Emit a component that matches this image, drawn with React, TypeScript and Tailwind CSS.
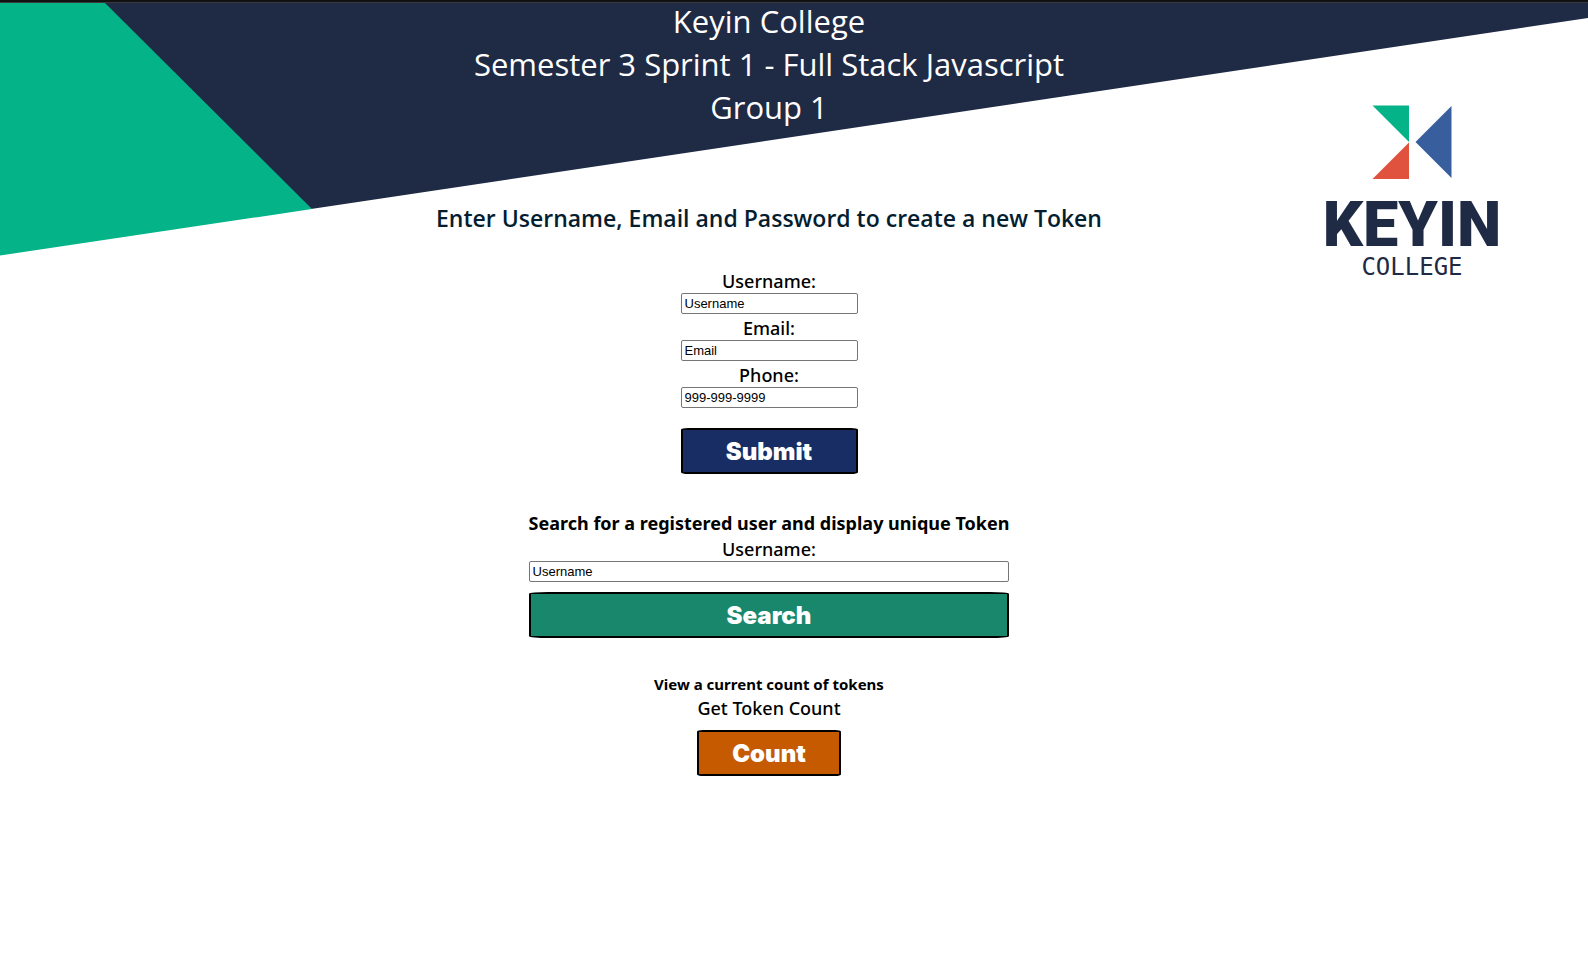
import type { ComponentProps, ReactNode } from "react";

function Backdrop() {
  return (
    <svg
      className="absolute inset-x-0 top-0 -z-10 h-[253px] w-full"
      viewBox="0 0 1588 253"
      preserveAspectRatio="none"
      aria-hidden="true"
    >
      <polygon points="100,0 1588,0 1588,15 311,206" fill="#1f2a44" />
      <polygon points="0,0 105,0 312,206 0,252.5" fill="#04b388" />
    </svg>
  );
}

function Logo() {
  return (
    <div className="absolute top-[102px] right-[90px] flex w-[172px] flex-col items-center text-[#1f2a44]">
      <svg width="80" height="74" viewBox="0 0 80 74" aria-hidden="true">
        <path d="M0.5 0.5H37V37Z" fill="#04b388" />
        <path d="M37 37.5V74H0.5Z" fill="#e0523d" />
        <path d="M79.5 1V73L43.5 37Z" fill="#385e9d" />
      </svg>
      <span className="mt-4 font-[Roboto,sans-serif] text-[63px] leading-[60px] font-black">KEYIN</span>
      <span className="font-['DejaVu_Sans_Mono',monospace] text-[24px] leading-[24px]">COLLEGE</span>
    </div>
  );
}

function Field({ id, label, value, type = "text" }: { id: string; label: string; value: string; type?: string }) {
  return (
    <div className="flex w-full flex-col">
      <label htmlFor={id} className="text-center text-[18px] leading-[24px] font-medium">
        {label}
      </label>
      <input
        id={id}
        type={type}
        defaultValue={value}
        className="h-[21px] w-full min-w-0 rounded-[2px] border border-[#767676] bg-white px-[3px] font-['Liberation_Sans',Arial,sans-serif] text-[13px] text-black"
      />
    </div>
  );
}

function ActionButton({ className, children, ...rest }: ComponentProps<"button"> & { children: ReactNode }) {
  return (
    <button
      {...rest}
      className={`h-[46px] w-full rounded-[4%] border-2 border-black pt-[2px] font-[Inter,sans-serif] text-[24px] leading-[24px] font-black text-white ${className}`}
    >
      {children}
    </button>
  );
}

export default function App() {
  return (
    <div className="min-h-screen bg-white font-['Noto_Sans',sans-serif] text-black">
      <div className="h-[3px] border-b border-[#3a3a3a] bg-[#111111]" />
      <div className="relative isolate">
        <Backdrop />
        <Logo />
        <main className="flex flex-col items-center pr-[50px]">
          <h1 className="-mt-[3px] text-center font-['Open_Sans',sans-serif] text-[31px] leading-[43px] font-normal text-white">
            Keyin College
            <br />
            Semester 3 Sprint 1 - Full Stack Javascript
            <br />
            Group 1
          </h1>

          <h2 className="mt-[73px] font-['Open_Sans',sans-serif] text-[23px] leading-[32px] font-semibold text-[#041e2f]">
            Enter Username, Email and Password to create a new Token
          </h2>
          <form className="mt-[35px] flex w-[177px] flex-col gap-[2px]" onSubmit={(e) => e.preventDefault()}>
            <Field id="new-username" label="Username:" value="Username" />
            <Field id="new-email" label="Email:" value="Email" />
            <Field id="new-phone" label="Phone:" value="999-999-9999" type="tel" />
            <ActionButton type="submit" className="mt-[18px] bg-[#172d64]">
              Submit
            </ActionButton>
          </form>

          <form className="mt-[38px] flex flex-col" onSubmit={(e) => e.preventDefault()}>
            <h3 className="pb-[2px] text-[18px] leading-[23px] font-bold">
              Search for a registered user and display unique Token
            </h3>
            <Field id="search-username" label="Username:" value="Username" />
            <ActionButton type="submit" className="mt-[10px] bg-[#19876b]">
              Search
            </ActionButton>
          </form>

          <section className="mt-[36px] flex flex-col items-center">
            <h4 className="pb-[2px] text-[15px] leading-[20px] font-bold">View a current count of tokens</h4>
            <form className="flex flex-col" onSubmit={(e) => e.preventDefault()}>
              <label htmlFor="count" className="text-[18px] leading-[24px] font-medium">
                Get Token Count
              </label>
              <ActionButton id="count" type="submit" className="mt-[10px] bg-[#c65a00]">
                Count
              </ActionButton>
            </form>
          </section>
        </main>
      </div>
    </div>
  );
}
